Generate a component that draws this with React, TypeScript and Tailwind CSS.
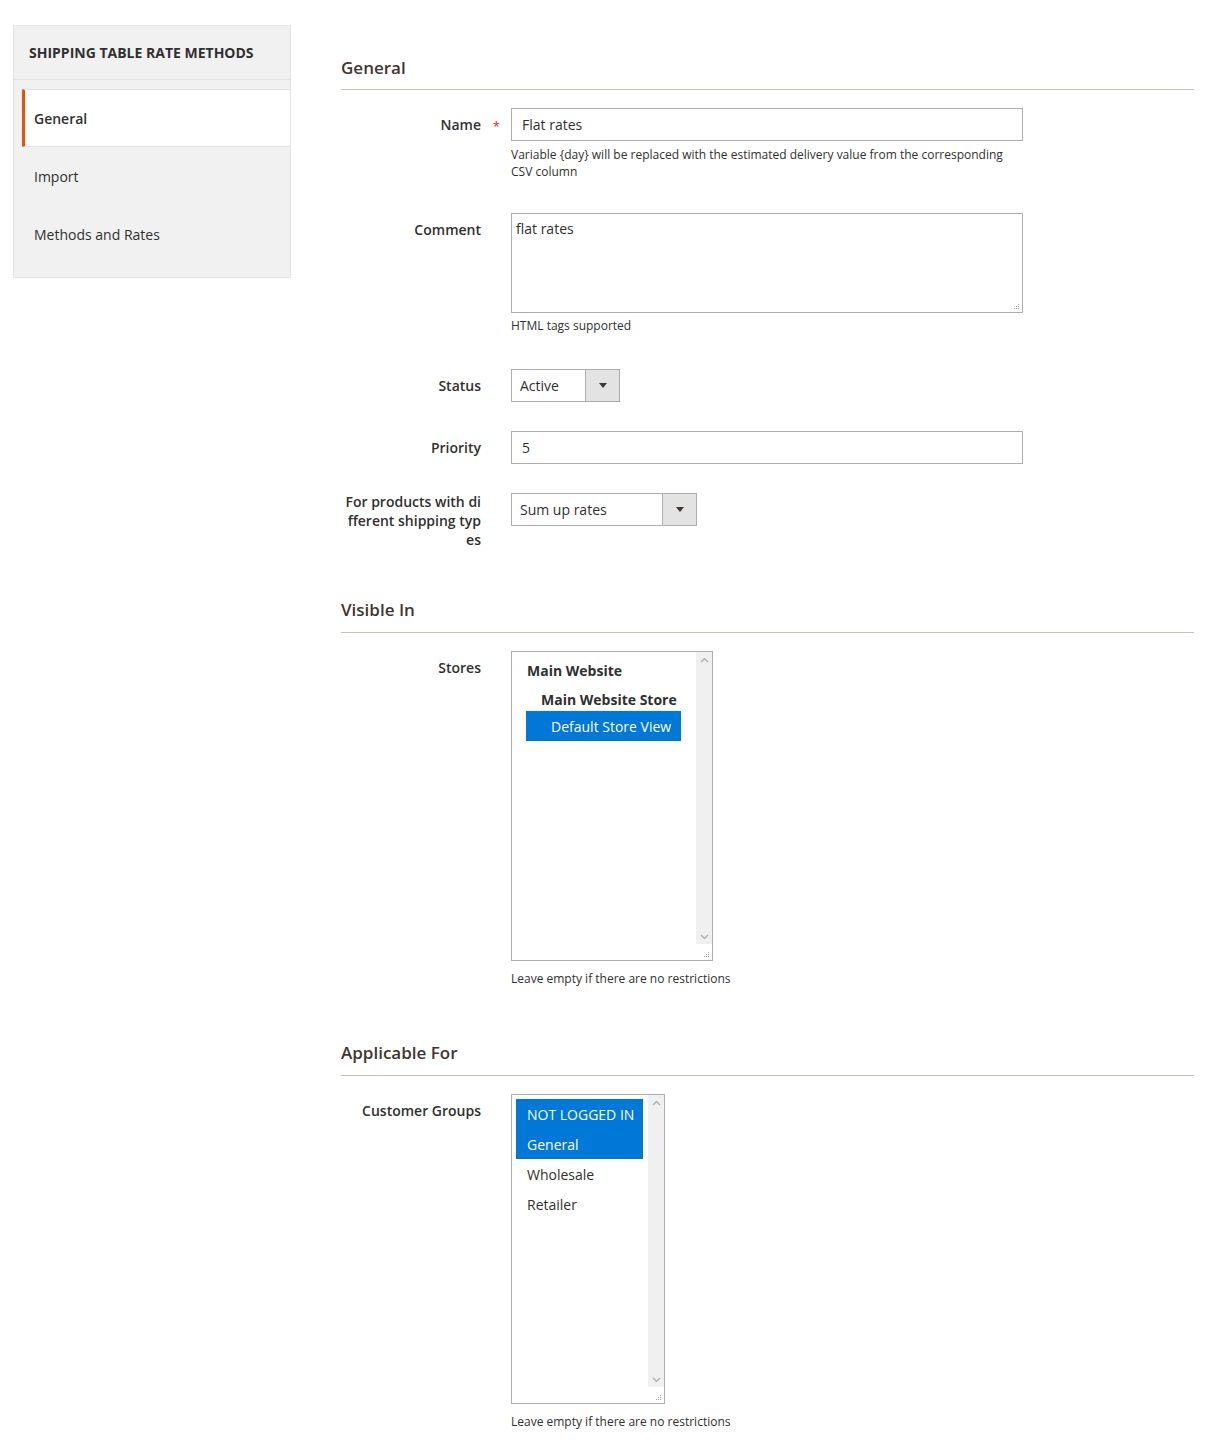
import React from "react";

const Grip = () => (
  <svg width="7" height="7" viewBox="0 0 7 7" className="block">
    <rect x="5" y="1" width="1" height="1" fill="#a0a0a0" />
    <rect x="3" y="3" width="1" height="1" fill="#a0a0a0" />
    <rect x="5" y="3" width="1" height="1" fill="#a0a0a0" />
    <rect x="1" y="5" width="1" height="1" fill="#a0a0a0" />
    <rect x="3" y="5" width="1" height="1" fill="#a0a0a0" />
    <rect x="5" y="5" width="1" height="1" fill="#a0a0a0" />
  </svg>
);

const ChevUp = () => (
  <svg width="9" height="6" viewBox="0 0 9 6" className="block">
    <polyline points="1,5 4.5,1.5 8,5" fill="none" stroke="#a8a8a8" strokeWidth="1.2" />
  </svg>
);
const ChevDown = () => (
  <svg width="9" height="6" viewBox="0 0 9 6" className="block">
    <polyline points="1,1 4.5,4.5 8,1" fill="none" stroke="#a8a8a8" strokeWidth="1.2" />
  </svg>
);

const Arrow = () => (
  <div className="h-0 w-0 border-l-[4px] border-r-[4px] border-t-[5px] border-l-transparent border-r-transparent border-t-[#41362f]" />
);

const Label = ({ children, required }: { children: React.ReactNode; required?: boolean }) => (
  <div className="relative w-[140px] shrink-0 text-right text-[14px] font-semibold leading-[33px] text-[#303030]">
    {children}
    {required && (
      <span className="absolute right-[-19px] top-[2px] text-[13px] font-normal text-[#e22626]">*</span>
    )}
  </div>
);

const Note = ({ children, className }: { children: React.ReactNode; className?: string }) => (
  <div className={"text-[12px] leading-[17px] text-[#303030] " + (className || "")}>{children}</div>
);

const Heading = ({ children, className }: { children: React.ReactNode; className?: string }) => (
  <div
    className={
      "border-b border-[#cac3b4] text-[17px] font-semibold leading-[22px] text-[#41362f] " + (className || "")
    }
  >
    {children}
  </div>
);

const Select = ({ value, width }: { value: string; width: string }) => (
  <div className={"flex h-[33px] border border-[#adadad] bg-white " + width}>
    <div className="flex flex-1 items-center pl-[8px] text-[14px] text-[#303030]">{value}</div>
    <div className="flex w-[34px] items-center justify-center border-l border-[#adadad] bg-[#e3e3e3]">
      <Arrow />
    </div>
  </div>
);

const Scrollbar = () => (
  <div className="flex w-[16px] flex-col">
    <div className="flex flex-1 flex-col items-center justify-between bg-[#f0f0f0] pb-[4px] pt-[5px]">
      <ChevUp />
      <ChevDown />
    </div>
    <div className="flex h-[16px] items-end justify-end pb-[2px] pr-[2px]">
      <Grip />
    </div>
  </div>
);

export default function App() {
  return (
    <div className="flex bg-white font-['Open_Sans',sans-serif] text-[#303030]">
      <aside className="ml-[13px] mt-[25px] w-[278px] shrink-0 self-start border border-[#e3e3e3] bg-[#f1f1f1]">
        <div className="flex h-[54px] items-center border-b border-[#e3e3e3] pl-[15px] text-[14px] font-bold uppercase text-[#303030]">
          Shipping Table Rate Methods
        </div>
        <div className="pb-[14px] pt-[9px]">
          <div className="ml-[8px] flex h-[58px] items-center border-y border-l-[3px] border-y-[#e3e3e3] border-l-[#eb5202] bg-white pl-[9px] text-[14px] font-semibold text-[#303030]">
            General
          </div>
          <div className="ml-[8px] flex h-[58px] items-center pl-[12px] text-[14px] text-[#303030]">Import</div>
          <div className="ml-[8px] flex h-[58px] items-center pl-[12px] text-[14px] text-[#303030]">
            Methods and Rates
          </div>
        </div>
      </aside>

      <main className="ml-[50px] mr-[37px] flex-1">
        <Heading className="mt-[57px] pb-[10px]">General</Heading>

        <div className="mt-[18px] flex">
          <Label required>Name</Label>
          <div className="ml-[30px]">
            <div className="flex h-[33px] w-[512px] items-center border border-[#adadad] bg-white px-[10px] text-[14px]">
              Flat rates
            </div>
            <Note className="mt-[5px] w-[512px]">
              Variable {"{day}"} will be replaced with the estimated delivery value from the corresponding CSV column
            </Note>
          </div>
        </div>

        <div className="mt-[33px] flex">
          <Label>Comment</Label>
          <div className="ml-[30px]">
            <div className="relative h-[100px] w-[512px] border border-[#adadad] bg-white pl-[4px] pt-[5px] text-[14px] leading-[20px]">
              flat rates
              <div className="absolute bottom-[2px] right-[2px]">
                <Grip />
              </div>
            </div>
            <Note className="mt-[4px]">HTML tags supported</Note>
          </div>
        </div>

        <div className="mt-[35px] flex">
          <Label>Status</Label>
          <div className="ml-[30px]">
            <Select value="Active" width="w-[109px]" />
          </div>
        </div>

        <div className="mt-[29px] flex">
          <Label>Priority</Label>
          <div className="ml-[30px]">
            <div className="flex h-[33px] w-[512px] items-center border border-[#adadad] bg-white px-[10px] text-[14px]">
              5
            </div>
          </div>
        </div>

        <div className="mt-[29px] flex">
          <div className="mt-[-1px] w-[140px] shrink-0 break-all text-right text-[14px] font-semibold leading-[19px] text-[#303030]">
            For products with different shipping types
          </div>
          <div className="ml-[30px]">
            <Select value="Sum up rates" width="w-[186px]" />
          </div>
        </div>

        <Heading className="mt-[50px] pb-[11px]">Visible In</Heading>

        <div className="mt-[18px] flex">
          <Label>Stores</Label>
          <div className="ml-[30px]">
            <div className="flex h-[310px] w-[202px] border border-[#adadad] bg-white">
              <div className="flex-1 pt-[3px] text-[14px]">
                <div className="flex h-[30px] items-center pl-[15px] font-bold">Main Website</div>
                <div className="flex h-[26px] items-center pl-[29px] pt-[3px] font-bold">Main Website Store</div>
                <div className="ml-[14px] flex h-[30px] w-[155px] items-center bg-[#0078d7] pl-[25px] text-white">
                  Default Store View
                </div>
              </div>
              <Scrollbar />
            </div>
            <Note className="mt-[9px]">Leave empty if there are no restrictions</Note>
          </div>
        </div>

        <Heading className="mt-[55px] pb-[11px]">Applicable For</Heading>

        <div className="mt-[18px] flex pb-[16px]">
          <Label>Customer Groups</Label>
          <div className="ml-[30px]">
            <div className="flex h-[310px] w-[154px] border border-[#adadad] bg-white">
              <div className="flex-1 pl-[4px] pt-[4px] text-[14px]">
                <div className="flex h-[30px] w-[127px] items-center bg-[#0078d7] pl-[11px] text-white">
                  NOT LOGGED IN
                </div>
                <div className="flex h-[30px] w-[127px] items-center bg-[#0078d7] pl-[11px] text-white">General</div>
                <div className="flex h-[30px] items-center pl-[11px]">Wholesale</div>
                <div className="flex h-[30px] items-center pl-[11px]">Retailer</div>
              </div>
              <Scrollbar />
            </div>
            <Note className="mt-[9px]">Leave empty if there are no restrictions</Note>
          </div>
        </div>
      </main>
    </div>
  );
}
